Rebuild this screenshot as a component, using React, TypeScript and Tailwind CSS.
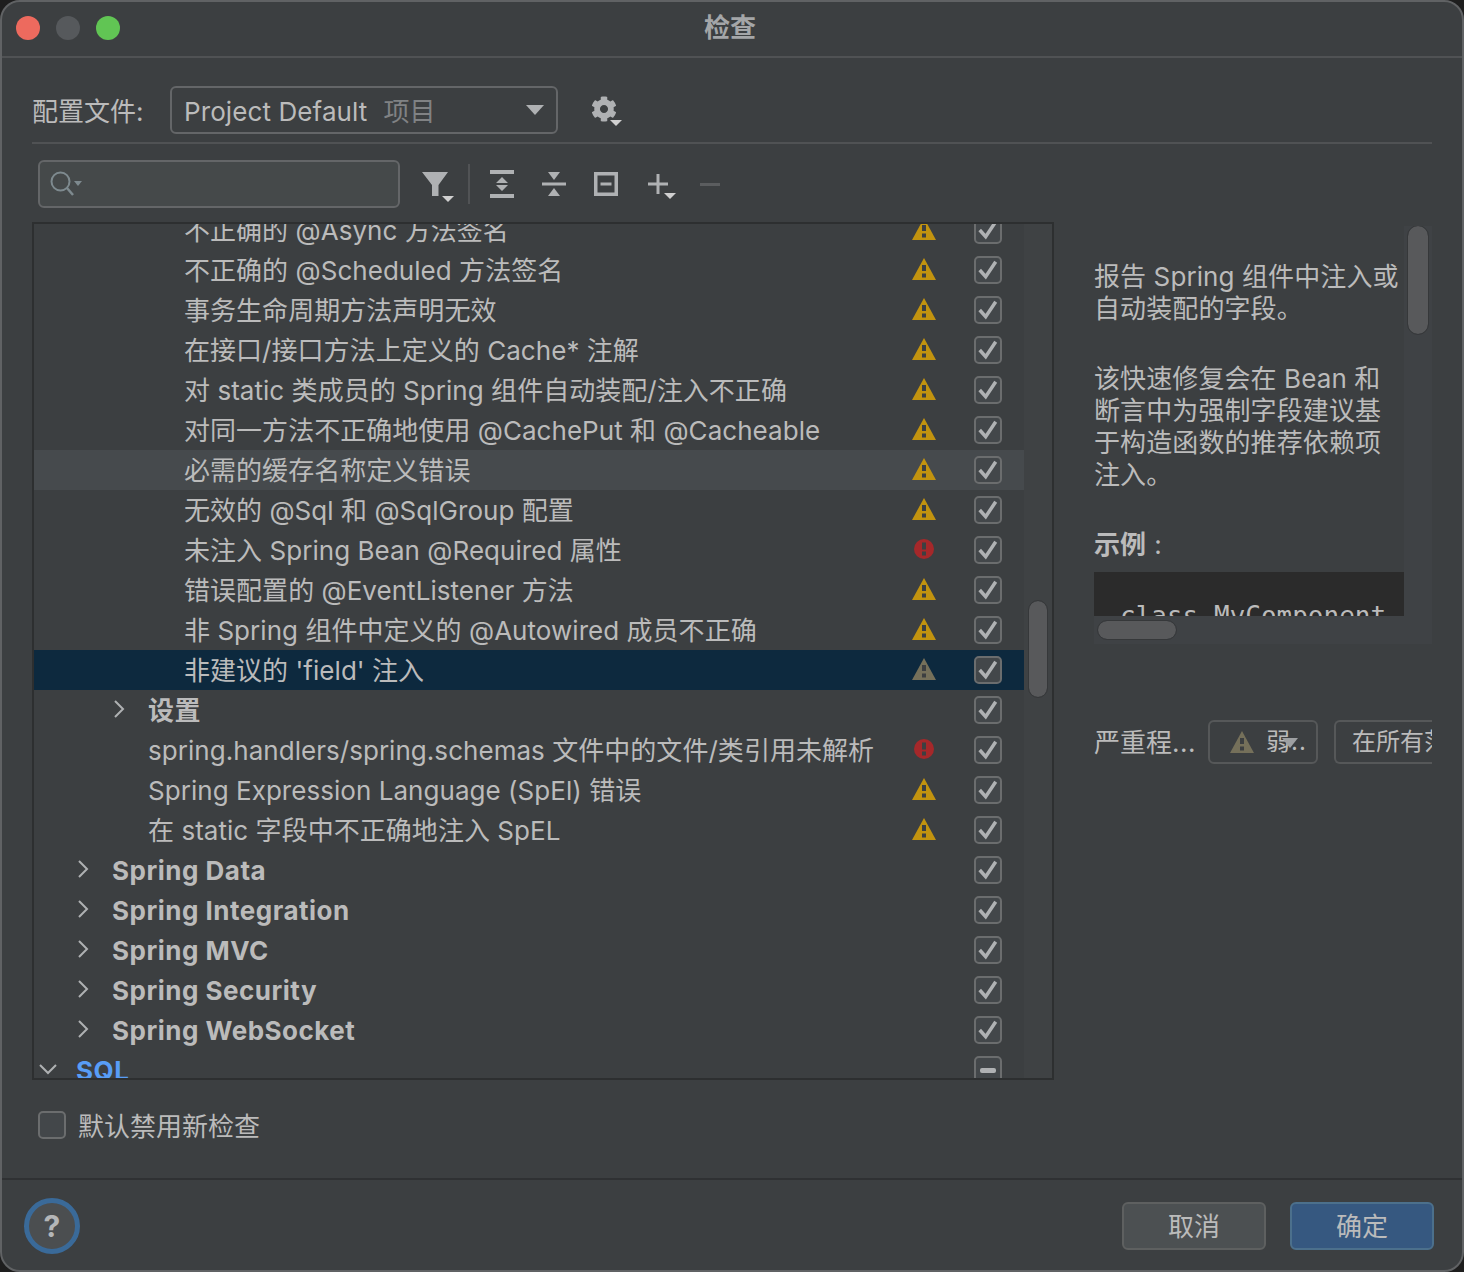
import { FaCog } from "react-icons/fa";

type Sev = "warn" | "error" | "weak" | null;
type Row = {
  text: string;
  indent: string;
  sev: Sev;
  bold?: boolean;
  open?: boolean;
  closed?: boolean;
  blue?: boolean;
  mixed?: boolean;
  hover?: boolean;
  selected?: boolean;
};

const d3 = "pl-[150px]";
const d2 = "pl-[114px]";
const d1 = "pl-[78px]";
const d0 = "pl-[42px]";

const rows: Row[] = [
  { text: "不正确的 @Async 方法签名", indent: d3, sev: "warn" },
  { text: "不正确的 @Scheduled 方法签名", indent: d3, sev: "warn" },
  { text: "事务生命周期方法声明无效", indent: d3, sev: "warn" },
  { text: "在接口/接口方法上定义的 Cache* 注解", indent: d3, sev: "warn" },
  { text: "对 static 类成员的 Spring 组件自动装配/注入不正确", indent: d3, sev: "warn" },
  { text: "对同一方法不正确地使用 @CachePut 和 @Cacheable", indent: d3, sev: "warn" },
  { text: "必需的缓存名称定义错误", indent: d3, sev: "warn", hover: true },
  { text: "无效的 @Sql 和 @SqlGroup 配置", indent: d3, sev: "warn" },
  { text: "未注入 Spring Bean @Required 属性", indent: d3, sev: "error" },
  { text: "错误配置的 @EventListener 方法", indent: d3, sev: "warn" },
  { text: "非 Spring 组件中定义的 @Autowired 成员不正确", indent: d3, sev: "warn" },
  { text: "非建议的 'field' 注入", indent: d3, sev: "weak", selected: true },
  { text: "设置", indent: d2, sev: null, closed: true, bold: true },
  { text: "spring.handlers/spring.schemas 文件中的文件/类引用未解析", indent: d2, sev: "error" },
  { text: "Spring Expression Language (SpEl) 错误", indent: d2, sev: "warn" },
  { text: "在 static 字段中不正确地注入 SpEL", indent: d2, sev: "warn" },
  { text: "Spring Data", indent: d1, sev: null, closed: true, bold: true },
  { text: "Spring Integration", indent: d1, sev: null, closed: true, bold: true },
  { text: "Spring MVC", indent: d1, sev: null, closed: true, bold: true },
  { text: "Spring Security", indent: d1, sev: null, closed: true, bold: true },
  { text: "Spring WebSocket", indent: d1, sev: null, closed: true, bold: true },
  { text: "SQL", indent: d0, sev: null, open: true, bold: true, blue: true, mixed: true },
];

function Warn({ color = "#c2930f" }: { color?: string }) {
  return (
    <svg width="24" height="22" viewBox="0 0 24 22" className="block">
      <path d="M12 0 24 22H0Z" fill={color} />
      <rect x="10" y="7" width="4" height="6" fill="#3c3f41" />
      <rect x="10" y="15.5" width="4" height="4" fill="#3c3f41" />
    </svg>
  );
}

function Err() {
  return (
    <svg width="20" height="20" viewBox="0 0 20 20" className="block">
      <circle cx="10" cy="10" r="10" fill="#a5282a" />
      <rect x="8" y="3.5" width="4" height="7" fill="#3c3f41" />
      <rect x="8" y="12.5" width="4" height="4" fill="#3c3f41" />
    </svg>
  );
}

function Check({ mixed }: { mixed?: boolean }) {
  return (
    <div className="w-[28px] h-[28px] shrink-0 rounded-[5px] border-2 border-[#6b6d6e] bg-[#43474a] flex items-center justify-center">
      {mixed ? (
        <div className="w-[16px] h-[5px] rounded-[2px] bg-[#afb1b3]" />
      ) : (
        <svg width="24" height="24" viewBox="0 0 24 24" className="block">
          <path d="M3.700 12 9.700 18.700 19.700 3.700" fill="none" stroke="#afb1b3" strokeWidth="3.500" />
        </svg>
      )}
    </div>
  );
}

function Chevron({ open }: { open?: boolean }) {
  return (
    <svg width="18" height="20" viewBox="0 0 18 20" className="block">
      <path
        d={open ? "M1 6 9 14 17 6" : "M4 2 12 10 4 18"}
        fill="none"
        stroke="#afb1b3"
        strokeWidth="2"
      />
    </svg>
  );
}

function MiniArrow() {
  return (
    <svg width="12" height="6" viewBox="0 0 12 6" className="block">
      <path d="M0 0H12L6 6Z" fill="#d0d0d0" />
    </svg>
  );
}

function Toolbar() {
  return (
    <div className="flex items-center h-[48px] ml-[22px]">
      <div className="w-[32px] h-[32px] mt-[6px]">
        <svg width="32" height="32" viewBox="0 0 32 32" className="block">
          <path d="M0 1H26L16.500 14V25H10V14Z" fill="#afb1b3" />
          <path d="M20 25H32L26 31Z" fill="#d0d0d0" />
        </svg>
      </div>
      <div className="w-[2px] h-[40px] bg-[#515355] ml-[14px] mr-[20px]" />
      <svg width="24" height="28" viewBox="0 0 24 28" className="block mr-[28px]">
        <path d="M0 0H24V4H0ZM0 24H24V28H0ZM12 7 18 13H6ZM12 21 6 15H18Z" fill="#afb1b3" />
      </svg>
      <svg width="24" height="24" viewBox="0 0 24 24" className="block mr-[28px]">
        <path d="M0 10.500H24V13.500H0ZM12 8 6 0H18ZM12 16 18 24H6Z" fill="#afb1b3" />
      </svg>
      <svg width="24" height="24" viewBox="0 0 24 24" className="block mr-[30px]">
        <path d="M0 0H24V24H0ZM3.500 3.500V20.500H20.500V3.500ZM6.500 10.500H17.500V13.500H6.500Z" fill="#afb1b3" fillRule="evenodd" />
      </svg>
      <div className="relative w-[20px] h-[20px] mr-[32px]">
        <svg width="20" height="20" viewBox="0 0 20 20" className="block">
          <path d="M8.500 0H11.500V8.500H20V11.500H11.500V20H8.500V11.500H0V8.500H8.500Z" fill="#afb1b3" />
        </svg>
        <div className="absolute left-[16px] top-[19px]">
          <MiniArrow />
        </div>
      </div>
      <div className="w-[20px] h-[3px] bg-[#5b5d5f]" />
    </div>
  );
}

function TreeRow({ row }: { row: Row }) {
  const bg = row.selected ? "bg-[#0d293e]" : row.hover ? "bg-[#464a4d]" : "";
  const color = row.blue ? "text-[#589df6]" : "text-[#bbbbbb]";
  const type = row.bold ? "font-bold tracking-[0.5px]" : "tracking-[0.04px]";
  return (
    <div className={`relative h-[40px] shrink-0 flex items-center pr-[22px] ${bg} ${row.indent}`}>
      {row.closed && (
        <div className={row.indent === d2 ? "absolute left-[77px] -mt-[2px]" : "absolute left-[41px] -mt-[2px]"}>
          <Chevron />
        </div>
      )}
      {row.open && (
        <div className="absolute left-[5px] -mt-[2px]">
          <Chevron open />
        </div>
      )}
      <span className={`whitespace-nowrap text-[26px] leading-[32px] pt-[2px] ${type} ${color}`}>{row.text}</span>
      <div className="ml-auto w-[24px] -mt-[2px] flex justify-center">
        {row.sev === "warn" && <Warn />}
        {row.sev === "weak" && <Warn color="#75705a" />}
        {row.sev === "error" && <Err />}
      </div>
      <div className="ml-[38px]">
        <Check mixed={row.mixed} />
      </div>
    </div>
  );
}

export default function App() {
  return (
    <div className="w-[1464px] h-[1272px] bg-[#1e1e1e] font-['Inter','Noto_Sans_CJK_SC',sans-serif] text-[#bbbbbb]">
      <div className="w-full h-full flex flex-col rounded-[20px] border-2 border-[#606264] bg-[#3c3f41] overflow-hidden">
        {/* title bar */}
        <div className="relative h-[56px] shrink-0 flex items-center justify-center border-b-2 border-[#505254]">
          <div className="absolute left-[14px] top-[14px] flex gap-[16px]">
            <div className="w-[24px] h-[24px] rounded-full bg-[#ed6a5e]" />
            <div className="w-[24px] h-[24px] rounded-full bg-[#56595c]" />
            <div className="w-[24px] h-[24px] rounded-full bg-[#61c554]" />
          </div>
          <span className="text-[26px] font-bold text-[#a4a6a8] -mt-[4px] -ml-[4px]">检查</span>
        </div>

        <div className="flex-1 min-h-0 px-[30px] flex flex-col">
          {/* profile row */}
          <div className="flex items-center mt-[28px] h-[48px] shrink-0">
            <span className="text-[26px] w-[138px] pt-[2px]">配置文件:</span>
            <div className="w-[388px] h-[48px] rounded-[6px] border-2 border-[#646668] bg-[#3c3f41] flex items-center pl-[12px] pr-[12px]">
              <span className="text-[26px] whitespace-nowrap tracking-[0.1px] pt-[2px]">Project Default</span>
              <span className="text-[26px] ml-[16px] text-[#808284] pt-[2px]">项目</span>
              <svg width="18" height="10" viewBox="0 0 18 10" className="block ml-auto">
                <path d="M0 0H18L9 10Z" fill="#afb1b3" />
              </svg>
            </div>
            <div className="relative ml-[33px] mt-[3px] w-[32px] h-[32px]">
              <FaCog size={26} color="#afb1b3" />
              <div className="absolute left-[19px] top-[24px]">
                <MiniArrow />
              </div>
            </div>
          </div>

          <div className="h-[2px] bg-[#505254] mt-[8px] shrink-0" />

          {/* search and actions */}
          <div className="flex items-center mt-[16px] ml-[6px] shrink-0">
            <div className="w-[362px] h-[48px] rounded-[6px] border-2 border-[#646668] bg-[#45494a] flex items-center pl-[10px]">
              <svg width="34" height="26" viewBox="0 0 34 26" className="block">
                <circle cx="10.500" cy="10.500" r="9" fill="none" stroke="#7e8a8f" strokeWidth="2" />
                <path d="M17 17 23 24" stroke="#7e8a8f" strokeWidth="2.500" />
                <path d="M24 10H32L28 15Z" fill="#7e8a8f" />
              </svg>
            </div>
            <Toolbar />
          </div>

          {/* main area */}
          <div className="flex gap-[40px] mt-[14px] shrink-0">
            <div className="w-[1022px] h-[858px] border-2 border-[#2d2f30] flex overflow-hidden">
              <div className="flex-1 min-w-0 flex flex-col -mt-[14px]">
                {rows.map((row) => (
                  <TreeRow key={row.text} row={row} />
                ))}
              </div>
              <div className="w-[28px] shrink-0 bg-[#3f4244] pt-[377px] pl-[5px]">
                <div className="w-[18px] h-[96px] rounded-[9px] bg-[#58595b] outline outline-1 outline-[#36383a]" />
              </div>
            </div>

            {/* description */}
            <div className="w-[338px] flex flex-col">
              <div className="relative h-[418px] mt-[4px] bg-[#3f4245] overflow-hidden flex">
                <div className="w-[310px] h-[390px] bg-[#3c3f41] shrink-0 overflow-hidden pt-[35px]">
                  <div className="text-[26px] leading-[32px] whitespace-nowrap tracking-[0.1px]">
                    <div>报告 Spring 组件中注入或</div>
                    <div>自动装配的字段。</div>
                    <div className="mt-[38px]">该快速修复会在 Bean 和</div>
                    <div>断言中为强制字段建议基</div>
                    <div>于构造函数的推荐依赖项</div>
                    <div>注入。</div>
                    <div className="mt-[38px]">
                      <span className="font-bold">示例</span>
                      <span className="ml-[8px]">:</span>
                    </div>
                  </div>
                  <div className="mt-[11px] h-[60px] bg-[#2b2b2b] pt-[28px] pl-[26px] text-[26px] leading-[32px] font-['DejaVu_Sans_Mono',monospace] whitespace-nowrap">
                    class MyComponent
                  </div>
                </div>
                <div className="absolute right-[4px] top-[0px] w-[20px] h-[108px] rounded-[10px] bg-[#58595b] outline outline-1 outline-[#36383a]" />
                <div className="absolute left-[4px] top-[395px] w-[78px] h-[18px] rounded-[9px] bg-[#58595b] outline outline-1 outline-[#36383a]" />
              </div>

              <div className="flex items-center mt-[76px] overflow-hidden">
                <span className="text-[26px] w-[114px] shrink-0 whitespace-nowrap">
                  严重程<span className="tracking-[0.5px]">...</span>
                </span>
                <div className="relative w-[110px] h-[44px] shrink-0 rounded-[6px] border-2 border-[#565859] flex items-center pl-[20px]">
                  <Warn color="#75705a" />
                  <span className="text-[24px] ml-[12px] whitespace-nowrap tracking-[1px]">弱..</span>
                  <svg width="16" height="10" viewBox="0 0 16 10" className="block absolute left-[72px] top-[16px]">
                    <path d="M0 0H16L8 10Z" fill="#9ea0a2" />
                  </svg>
                </div>
                <div className="ml-[16px] w-[120px] h-[44px] shrink-0 rounded-l-[6px] border-2 border-r-0 border-[#565859] flex items-center pl-[16px] overflow-hidden">
                  <span className="text-[24px] whitespace-nowrap">在所有范围</span>
                </div>
              </div>
            </div>
          </div>

          {/* default disable */}
          <div className="flex items-center ml-[6px] mt-[24px] shrink-0">
            <div className="w-[28px] h-[28px] rounded-[5px] border-2 border-[#6b6d6e] bg-[#43474a]" />
            <span className="text-[26px] ml-[12px] pt-[3px]">默认禁用新检查</span>
          </div>
        </div>

        {/* footer */}
        <div className="h-[92px] shrink-0 border-t-2 border-[#2f3133] flex items-center pt-[2px] pl-[22px] pr-[28px]">
          <div className="w-[56px] h-[56px] rounded-full border-[5px] border-[#3a6a99] bg-[#4b4e50] flex items-center justify-center text-[30px] font-bold text-[#b4b6b8]">
            ?
          </div>
          <div className="ml-auto flex gap-[24px]">
            <div className="w-[144px] h-[48px] rounded-[6px] border-2 border-[#5e6060] bg-[#4c5052] flex items-center justify-center text-[26px]">
              取消
            </div>
            <div className="w-[144px] h-[48px] rounded-[6px] border-2 border-[#4c708c] bg-[#365880] flex items-center justify-center text-[26px]">
              确定
            </div>
          </div>
        </div>
      </div>
    </div>
  );
}
